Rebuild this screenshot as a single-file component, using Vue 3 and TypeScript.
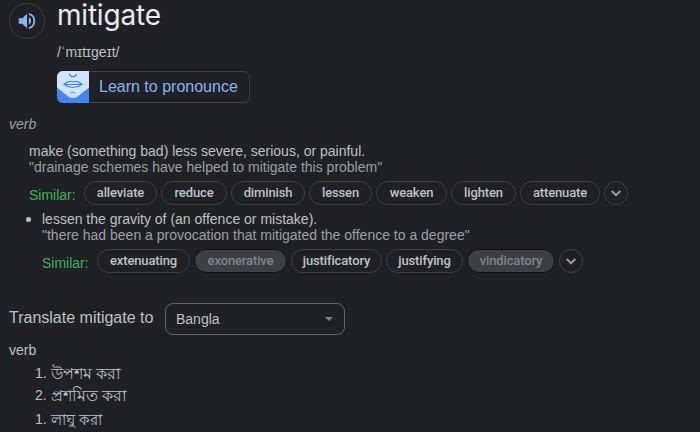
<script setup lang="ts">
import { ref } from 'vue'

interface Chip { text: string; width: number; muted?: boolean }
interface Sense { definition: string; example: string; bulleted: boolean; similar: Chip[] }

const senses: Sense[] = [
  {
    definition: 'make (something bad) less severe, serious, or painful.',
    example: '"drainage schemes have helped to mitigate this problem"',
    bulleted: false,
    similar: [
      { text: 'alleviate', width: 73 },
      { text: 'reduce', width: 66 },
      { text: 'diminish', width: 74 },
      { text: 'lessen', width: 63 },
      { text: 'weaken', width: 71 },
      { text: 'lighten', width: 65 },
      { text: 'attenuate', width: 80 },
    ],
  },
  {
    definition: 'lessen the gravity of (an offence or mistake).',
    example: '"there had been a provocation that mitigated the offence to a degree"',
    bulleted: true,
    similar: [
      { text: 'extenuating', width: 93 },
      { text: 'exonerative', width: 93, muted: true },
      { text: 'justificatory', width: 91 },
      { text: 'justifying', width: 77 },
      { text: 'vindicatory', width: 88, muted: true },
    ],
  },
]

const language = ref('Bangla')
const translations = [
  { number: 1, text: 'উপশম করা', size: 16 },
  { number: 2, text: 'প্রশমিত করা', size: 15.5 },
  { number: 1, text: 'লাঘু করা', size: 15 },
]
</script>

<template>
  <main class="card">
    <header class="head">
      <button class="speaker" aria-label="Listen">
        <svg viewBox="0 0 24 24" width="22" height="22">
          <path d="M3 9v6h4l5 5V4L7 9H3zm13.5 3A4.5 4.5 0 0 0 14 7.97v8.05A4.48 4.48 0 0 0 16.5 12zM14 3.23v2.06a7 7 0 0 1 0 13.42v2.06a9 9 0 0 0 0-17.54z" />
        </svg>
      </button>
      <div class="word">
        <h1>mitigate</h1>
        <div class="phonetic">/ˈmɪtɪɡeɪt/</div>
        <button class="learn">
          <svg class="mouth" viewBox="0 0 32 32" width="32" height="32">
            <path fill="#4285f4" d="M0 0h32v32H0z" />
            <path fill="#d2e3fc" d="M0 0h32v16.500L22 24.500Q16 29.500 10 24.500L0 16.500z" />
            <g fill="none" stroke="#4285f4" stroke-width="1.200">
              <path d="M12 2.800l2.500 2.800h3L20 2.800" />
              <path d="M7 13.500Q11 9.800 14 10.500q2 .6 4 0 3-.7 7 3Q16 19.500 7 13.500z" />
              <path d="M7 13.500h18" />
              <path d="M13.500 22q2.500-1.600 5 0" stroke-width=".8" />
            </g>
          </svg>
          <span>Learn to pronounce</span>
        </button>
      </div>
    </header>

    <div class="pos">verb</div>

    <section v-for="(sense, i) in senses" :key="i" class="sense" :class="{ bulleted: sense.bulleted }">
      <p class="definition">{{ sense.definition }}</p>
      <p class="example">{{ sense.example }}</p>
      <div class="similar">
        <span class="label">Similar:</span>
        <span
          v-for="chip in sense.similar"
          :key="chip.text"
          class="chip"
          :class="{ muted: chip.muted }"
          :style="{ width: chip.width + 'px' }"
        >{{ chip.text }}</span>
        <button class="more" aria-label="More">
          <svg viewBox="0 0 12 12" width="12" height="12"><path d="M1.700 4l4.300 4.200L10.300 4" /></svg>
        </button>
      </div>
    </section>

    <section class="translate">
      <span class="prompt">Translate mitigate to</span>
      <button class="select">
        <span>{{ language }}</span>
        <svg viewBox="0 0 8 4" width="8" height="4"><path d="M0 0h8L4 4z" /></svg>
      </button>
    </section>

    <div class="target-pos">verb</div>
    <ol class="list">
      <li v-for="(t, i) in translations" :key="i">
        <span class="num">{{ t.number }}.</span><span class="bn" :style="{ fontSize: t.size + 'px' }">{{ t.text }}</span>
      </li>
    </ol>
  </main>
</template>

<style>
body { background: #202124; }
</style>

<style scoped>
.card {
  box-sizing: border-box;
  width: 700px;
  height: 432px;
  overflow: hidden;
  padding: 0 9px;
  background: #202124;
  color: #bdc1c6;
  font: 14px/16px "Liberation Sans", Arial, sans-serif;
}
button { padding: 0; background: none; font: inherit; color: inherit; box-sizing: border-box; }
.head { display: flex; gap: 12px; height: 103px; }
.speaker {
  width: 36px;
  height: 36px;
  margin-top: 3px;
  border: 1px solid #3c4043;
  border-radius: 50%;
  display: flex;
  align-items: center;
  justify-content: center;
}
.speaker svg { fill: #8ab4f8; }
h1 {
  margin: 0;
  height: 44px;
  color: #e8eaed;
  font: 400 28px/30px Inter, sans-serif;
  letter-spacing: -0.2px;
}
.phonetic { height: 27px; white-space: nowrap; }
.learn {
  display: flex;
  align-items: center;
  width: 193px;
  height: 32px;
  border: 1px solid #3c4043;
  border-radius: 6px;
  color: #8ab4f8;
  font-size: 16px;
  white-space: nowrap;
}
.mouth { flex: none; margin-left: -1px; margin-right: 10px; border-radius: 6px 0 0 6px; }
.pos { margin: 13px 0 11px; font-style: italic; color: #9aa0a6; }
.sense { padding-left: 20px; height: 68px; white-space: nowrap; }
.sense.bulleted { position: relative; padding-left: 33px; }
.bulleted::before {
  content: "";
  position: absolute;
  left: 17px;
  top: 6px;
  width: 5px;
  height: 5px;
  border-radius: 50%;
  background: #bdc1c6;
}
p { margin: 0; }
.example { color: #9aa0a6; }
.similar { display: flex; gap: 4px; margin-top: 6px; }
.label { width: 51px; padding-top: 6px; color: #41af5f; }
.chip {
  box-sizing: border-box;
  height: 24px;
  border: 1px solid #3c4043;
  border-radius: 12px;
  text-align: center;
  font: 500 13px/22px Roboto, sans-serif;
  letter-spacing: -0.13px;
}
.muted { background: #3c4043; border-color: #101113; color: #80868b; }
.more {
  width: 24px;
  height: 24px;
  border: 1px solid #3c4043;
  border-radius: 50%;
  display: flex;
  align-items: center;
  justify-content: center;
}
.more svg { fill: none; stroke: #9aa0a6; stroke-width: 2; }
.translate { display: flex; align-items: center; margin-top: 24px; height: 32px; }
.prompt { width: 156px; margin-top: -2px; font-size: 16px; white-space: nowrap; }
.select {
  display: flex;
  align-items: center;
  justify-content: space-between;
  width: 180px;
  height: 32px;
  padding: 0 11px 0 10px;
  border: 1px solid #5f6368;
  border-radius: 8px;
}
.select svg { fill: #80868b; }
.target-pos { margin-top: 7px; }
.list { list-style: none; margin: 4px 0 0; padding: 0 0 0 26px; }
.list li { display: flex; height: 23px; line-height: 23px; }
.list li:nth-child(2) { line-height: 21px; }
.num { width: 16px; }
.bn { white-space: nowrap; }
</style>
